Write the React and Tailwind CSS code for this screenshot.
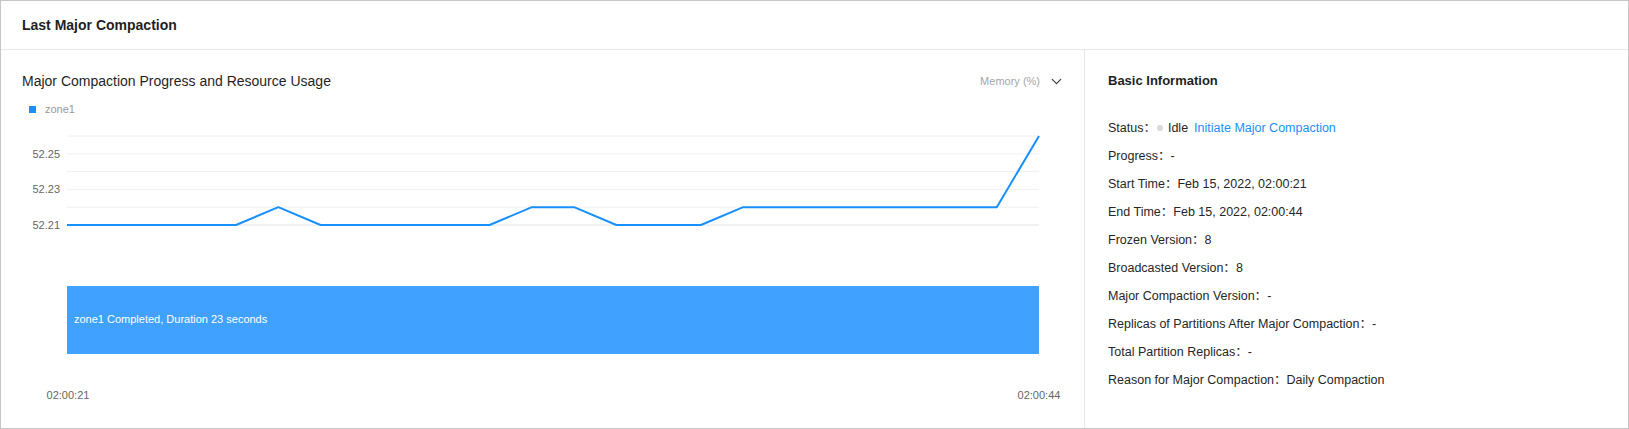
import { ChevronDown } from "lucide-react";

const FONT = { fontFamily: '"Liberation Sans", "Noto Sans CJK SC", sans-serif' };

// memory usage per second, 02:00:21 -> 02:00:44
const values = [
  52.21, 52.21, 52.21, 52.21, 52.21, 52.22, 52.21, 52.21, 52.21, 52.21, 52.21, 52.22,
  52.22, 52.21, 52.21, 52.21, 52.22, 52.22, 52.22, 52.22, 52.22, 52.22, 52.22, 52.26,
];

const info = [
  { label: "Progress", value: "-" },
  { label: "Start Time", value: "Feb 15, 2022, 02:00:21" },
  { label: "End Time", value: "Feb 15, 2022, 02:00:44" },
  { label: "Frozen Version", value: "8" },
  { label: "Broadcasted Version", value: "8" },
  { label: "Major Compaction Version", value: "-" },
  { label: "Replicas of Partitions After Major Compaction", value: "-" },
  { label: "Total Partition Replicas", value: "-" },
  { label: "Reason for Major Compaction", value: "Daily Compaction" },
];

const Chart = () => {
  const x0 = 66;
  const x1 = 1038;
  const step = (x1 - x0) / (values.length - 1);
  const yOf = (v) => 134 - (v - 52.21) * 1780;
  const grid = [52.26, 52.25, 52.24, 52.23, 52.22, 52.21];
  const points = values.map((v, i) => `${x0 + i * step},${yOf(v)}`).join(" ");

  return (
    <svg width="1083" height="335" className="block -mx-[21px]" style={FONT}>
      <rect x="28" y="15" width="7" height="7" fill="#1890ff" />
      <text x="44" y="22" fontSize="11" fill="#999">zone1</text>

      {grid.map((g) => (
        <line key={g} x1={x0} x2={x1} y1={yOf(g)} y2={yOf(g)} stroke={g === 52.21 ? "#e3e3e3" : "#f0f0f0"} strokeWidth="1" />
      ))}
      {[52.25, 52.23, 52.21].map((g) => (
        <text key={g} x="59" y={yOf(g) + 4} fontSize="11" fill="#666" textAnchor="end">
          {g.toFixed(2)}
        </text>
      ))}
      <polyline points={points} fill="none" stroke="#1890ff" strokeWidth="2" strokeLinejoin="round" />

      <rect x={x0} y="195" width={x1 - x0} height="68" fill="#40a1ff" />
      <text x="73" y="232" fontSize="11" fill="#fff">zone1 Completed, Duration 23 seconds</text>

      <text x={x0 + 1} y="308" fontSize="11" fill="#666" textAnchor="middle">02:00:21</text>
      <text x={x1} y="308" fontSize="11" fill="#666" textAnchor="middle">02:00:44</text>
    </svg>
  );
};

const App = () => {
  return (
    <div className="w-[1629px] h-[429px] bg-white border border-[#c6c6c6] flex flex-col text-[#262626]" style={FONT}>
      <div className="h-[49px] shrink-0 flex items-center px-[21px] border-b border-[#e8e8e8]">
        <h1 className="text-[14px] font-bold text-[#1f1f1f]">Last Major Compaction</h1>
      </div>

      <div className="flex flex-1 min-h-0">
        {/* Chart */}
        <div className="w-[1084px] shrink-0 border-r border-[#e8e8e8] pt-[21px] px-[21px]">
          <div className="h-5 flex items-center justify-between">
            <h2 className="text-[14px] text-[#1f1f1f]">Major Compaction Progress and Resource Usage</h2>
            <div className="flex items-center gap-[8px] -mr-[2px]">
              <span className="text-[11px] text-[#a6a6a6]">Memory (%)</span>
              <ChevronDown size={17} strokeWidth={1.5} className="text-[#333]" />
            </div>
          </div>
          <Chart />
        </div>

        {/* Basic info */}
        <div className="flex-1 pl-[23px] pt-[21px]">
          <h2 className="h-5 flex items-center text-[13px] font-bold text-[#1f1f1f]">Basic Information</h2>
          <ul className="mt-[23px] text-[12.5px]">
            <li className="h-7 flex items-center">
              <span>Status：</span>
              <span className="w-[6px] h-[6px] rounded-full bg-[#d9d9d9] ml-[1px] mr-[5px]" />
              <span>Idle</span>
              <span className="ml-[6px] text-[#1890ff]">Initiate Major Compaction</span>
            </li>
            {info.map((row) => (
              <li key={row.label} className="h-7 flex items-center">
                <span>{row.label}：</span>
                <span>{row.value}</span>
              </li>
            ))}
          </ul>
        </div>
      </div>
    </div>
  );
};

export default App;
